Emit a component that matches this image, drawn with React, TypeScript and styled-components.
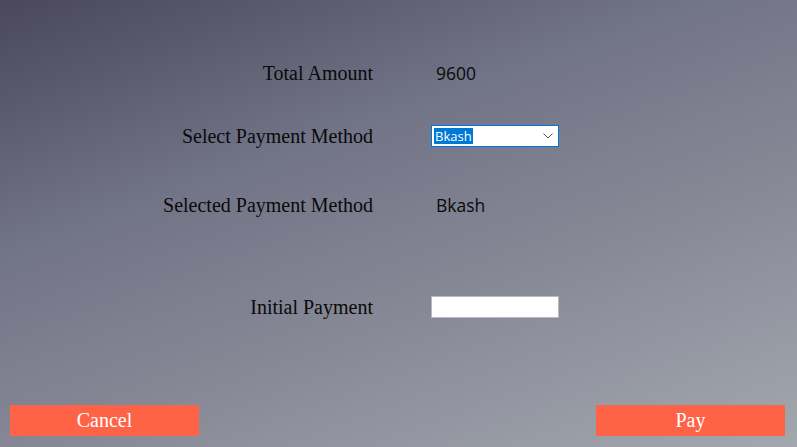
import React from 'react';
import styled, { createGlobalStyle } from 'styled-components';

const GlobalStyle = createGlobalStyle`
  html, body {
    margin: 0;
    padding: 0;
    width: 100%;
    height: 100%;
    overflow: hidden;
  }
  #root {
    height: 100%;
  }
`;

const Screen = styled.div`
  width: 797px;
  height: 447px;
  display: flex;
  flex-direction: column;
  justify-content: space-between;
  background: linear-gradient(160deg, #4a475a 0%, #727487 35%, #898a97 65%, #a2a8ae 100%);
  font-family: 'Liberation Serif', 'Times New Roman', serif;
  color: #0a0a0a;
`;

const Form = styled.div`
  display: flex;
  flex-direction: column;
  padding-top: 62px;
`;

const Row = styled.div<{ $gap?: number }>`
  display: grid;
  grid-template-columns: 373px 128px;
  column-gap: 58px;
  align-items: center;
  height: 22px;
  margin-top: ${(p) => p.$gap ?? 0}px;
`;

const Label = styled.div`
  text-align: right;
  font-size: 20px;
  line-height: 22px;
  white-space: nowrap;
`;

const Value = styled.div`
  font-family: 'Open Sans', 'Noto Sans', sans-serif;
  font-size: 17.5px;
  line-height: 22px;
  padding-left: 5px;
  color: #0a0a0a;
`;

const SelectBox = styled.div`
  position: relative;
  box-sizing: border-box;
  height: 22px;
  width: 128px;
  border: 1px solid #0078d7;
  background: #fff;
  display: flex;
  align-items: center;
  padding-left: 2px;
  font-family: 'Open Sans', 'Noto Sans', sans-serif;
  font-size: 13px;
`;

const Highlight = styled.span`
  background: #0078d7;
  color: #fff;
  line-height: 16px;
  padding: 0 1px;
`;

const Chevron = styled.svg`
  position: absolute;
  right: 5px;
  top: 7px;
`;

const TextInput = styled.input`
  box-sizing: border-box;
  width: 128px;
  height: 22px;
  border: 1px solid #b8b8c0;
  background: #fff;
  margin: 0;
  padding: 0 4px;
  outline: none;
`;

const Footer = styled.div`
  display: flex;
  justify-content: space-between;
  padding: 0 12px 11px 10px;
`;

const ActionButton = styled.button`
  width: 189px;
  height: 31px;
  border: none;
  background: #ff6347;
  color: #fff;
  font-family: 'Liberation Serif', 'Times New Roman', serif;
  font-size: 20px;
  padding: 0;
  cursor: pointer;
`;

export default function App() {
  return (
    <>
      <GlobalStyle />
      <Screen>
        <Form>
          <Row>
            <Label>Total Amount</Label>
            <Value>9600</Value>
          </Row>
          <Row $gap={41}>
            <Label>Select Payment Method</Label>
            <SelectBox>
              <Highlight>Bkash</Highlight>
              <Chevron width="10" height="6" viewBox="0 0 10 6">
                <path d="M0.5 0.5 L5 5 L9.5 0.5" fill="none" stroke="#555" strokeWidth="1" />
              </Chevron>
            </SelectBox>
          </Row>
          <Row $gap={47}>
            <Label>Selected Payment Method</Label>
            <Value>Bkash</Value>
          </Row>
          <Row $gap={80}>
            <Label>Initial Payment</Label>
            <TextInput type="text" />
          </Row>
        </Form>
        <Footer>
          <ActionButton>Cancel</ActionButton>
          <ActionButton>Pay</ActionButton>
        </Footer>
      </Screen>
    </>
  );
}
